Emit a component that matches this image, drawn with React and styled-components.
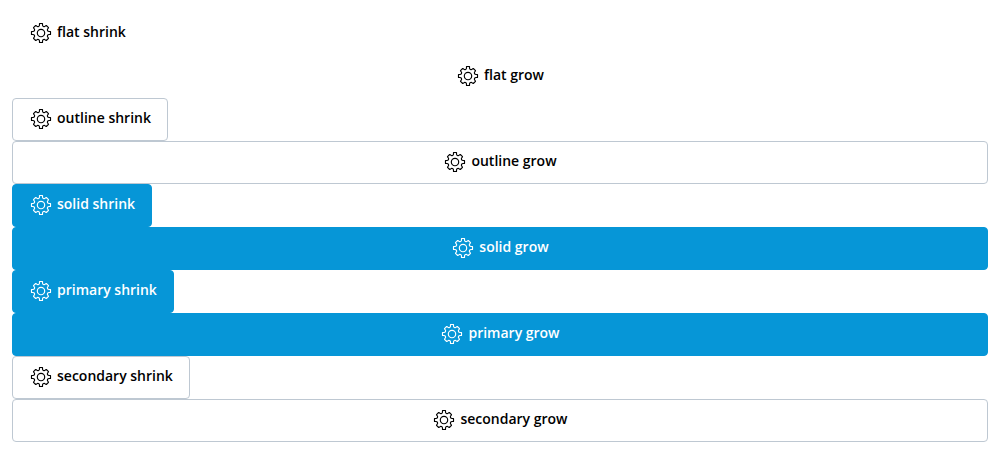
import React from "react";
import styled, { createGlobalStyle, css } from "styled-components";

const GlobalStyle = createGlobalStyle`
  *, *::before, *::after { box-sizing: border-box; }
  body { margin: 0; background: #fff; }
`;

const ButtonList = styled.main`
  display: flex;
  flex-direction: column;
  align-items: flex-start;
  padding: 12px;
`;

const variants = {
  flat: css`
    color: #000;
    background: transparent;
    border-color: transparent;
  `,
  outline: css`
    color: #000;
    background: #fff;
    border-color: #bec8d2;
  `,
  solid: css`
    color: #fff;
    background: #0696d7;
    border-color: #0696d7;
  `,
};

const Button = styled.button`
  display: inline-flex;
  align-items: center;
  justify-content: center;
  gap: 4px;
  width: ${({ $grow }) => ($grow ? "100%" : "auto")};
  margin: 0;
  padding: 8px 16px 9px;
  border: 1px solid;
  border-radius: 4px;
  font-family: "Open Sans", "Noto Sans", sans-serif;
  font-size: 14px;
  font-weight: 600;
  line-height: 24px;
  white-space: nowrap;
  cursor: pointer;
  ${({ $variant }) => variants[$variant]}
`;

const Icon = styled.svg`
  flex: none;
  width: 24px;
  height: 24px;
  fill: none;
  stroke: currentColor;
  stroke-width: 1.15;
  stroke-linejoin: round;
`;

const Label = styled.span`
  padding-bottom: 2px;
  line-height: 22px;
`;

function GearIcon() {
  return (
    <Icon viewBox="0 0 24 24" aria-hidden="true">
      <path d="M10.5 2.5H13.5V3.9C13.5 5.5 15.2 6.2 16.3 5.1L17.3 4.5L19.5 6.7L18.9 7.7C17.8 8.8 18.5 10.5 20.1 10.5H21.5V13.5H20.1C18.5 13.5 17.8 15.2 18.9 16.3L19.5 17.3L17.3 19.5L16.3 18.9C15.2 17.8 13.5 18.5 13.5 20.1V21.5H10.5V20.1C10.5 18.5 8.8 17.8 7.7 18.9L6.7 19.5L4.5 17.3L5.1 16.3C6.2 15.2 5.5 13.5 3.9 13.5H2.5V10.5H3.9C5.5 10.5 6.2 8.8 5.1 7.7L4.5 6.7L6.7 4.5L7.7 5.1C8.8 6.2 10.5 5.5 10.5 3.9Z" />
      <circle cx="12" cy="12" r="3.7" />
    </Icon>
  );
}

const kinds = [
  { name: "flat", variant: "flat" },
  { name: "outline", variant: "outline" },
  { name: "solid", variant: "solid" },
  { name: "primary", variant: "solid" },
  { name: "secondary", variant: "outline" },
];

export default function App() {
  return (
    <>
      <GlobalStyle />
      <ButtonList>
        {kinds.map(({ name, variant }) =>
          ["shrink", "grow"].map((sizing) => (
            <Button
              key={`${name}-${sizing}`}
              type="button"
              $variant={variant}
              $grow={sizing === "grow"}
            >
              <GearIcon />
              <Label>{`${name} ${sizing}`}</Label>
            </Button>
          ))
        )}
      </ButtonList>
    </>
  );
}
